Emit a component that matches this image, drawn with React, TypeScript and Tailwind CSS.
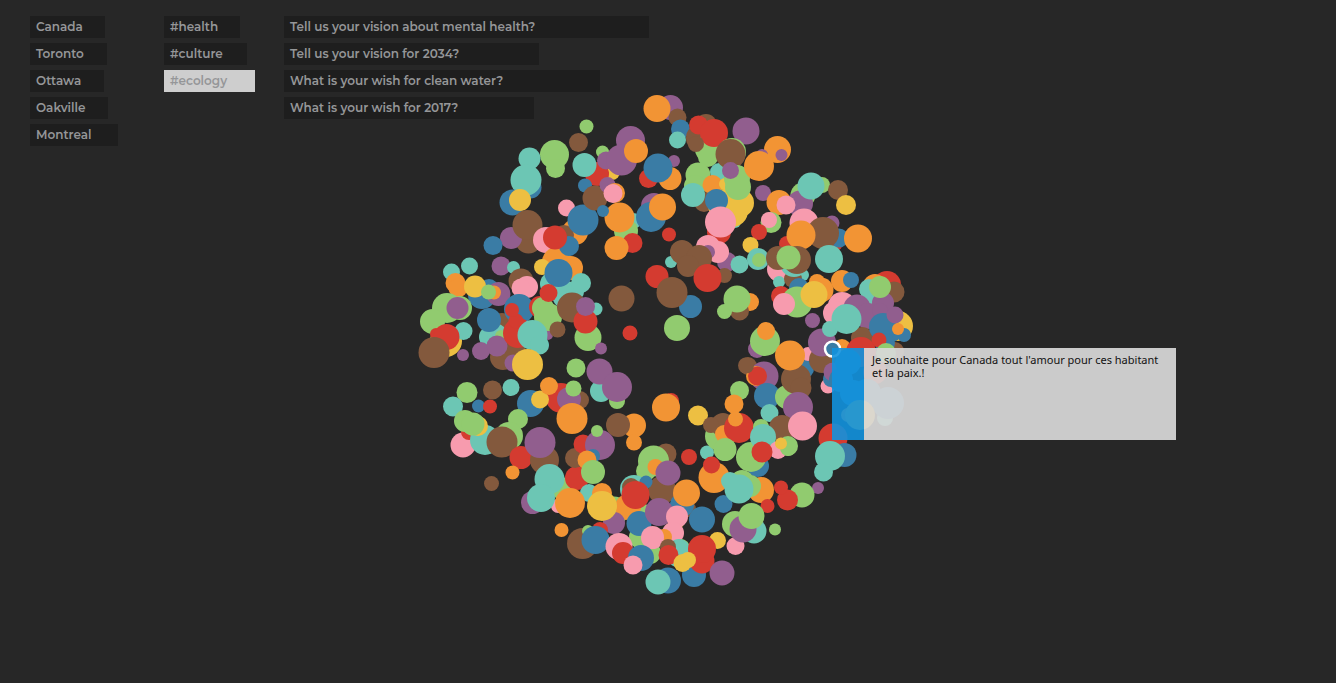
const palette: Record<string, string> = {
  o: '#f29434',
  p: '#915e8e',
  b: '#3a7ca5',
  t: '#6cc6b4',
  g: '#91cb6f',
  n: '#83593d',
  r: '#d43b30',
  y: '#edbf42',
  k: '#f79bae',
};

// Each entry is "colour x y radius", painted in order.
const wishes = `
g 586.5 126.5 7;n 578.5 142.5 9.5;g 554.5 154.5 14.5;g 555.5 168.5 9.5;t 529.5 158.5 11;b 530.5 187.5 11;t 526 180 15.5;b 512.5 202.5 13;y 520 200 11
n 528.5 240 13.5;p 511 238 11;n 527.5 225 15;b 493 245.5 9.5;k 566.5 208 8.5;o 575 232 13;n 564 235 10;k 546 240 13;o 557 262 15;o 571 268 12
b 569 246 10;r 555 237.5 12;b 583 220 15.5
p 670.5 107.5 12.5;n 677.5 117.5 9;o 657 108.5 13.5;b 680.5 129 9.5;t 677.5 140 8.5;n 706 125 11;n 700 138 14;g 709 149 14;r 698.5 125 9.5;r 714 133 14;n 696 144 8
g 708 157 10;p 746 131 13.5;t 719 172 9;g 732 152 14;n 730.5 154 15;g 698 175 12.5;g 695 186 11;o 712.5 185 10;n 704 202 10;y 725 184 6
t 735 222 6;y 724 205 16;y 732 211 16;y 740 203 14;g 737 178 13;g 738 187 13;p 730.5 170.5 8.5;t 693 195 12;b 716.5 200.5 11.5
r 719 232 12;k 708 247 12;p 727 262 10;k 718 252 11;p 708 252 7;k 720.5 222 15.5
p 630.5 140.5 14.5;y 612 172 8;g 602.5 152 6.5;r 597 174 12;p 606 160.5 9;p 621.5 160 15.5;o 636 151 12;t 584.5 165 12;b 585 185.5 7
n 595 198 12.5;p 607.5 185 8;o 615 193 10;k 613 193.5 9.5;t 633 221 8;g 626 231 12;o 619.5 217.5 15;b 603 211 6;r 632.5 243 10;o 616.5 248 12
p 674 161 6;r 648.5 178.5 9.5;o 670 178.5 11.5;b 658 168 14.5;p 654 206 13;b 651 217 15;o 662.5 207 13.5;r 669 234.5 7
o 777.5 149.5 13.5;p 762 155 6;p 781.5 155 6;o 759 166 15;p 763 193 8;o 779 202.5 12.5;g 803 195 12.5;p 800 203.5 13;k 786 205 9.5
g 822 185 8;t 811 186 13.5;n 838 190 10;y 846 205 10;g 771 222.5 10.5;k 769 220 8;r 759 232 8;y 750.5 245 8
k 804 223 14.5;p 832 223 7.5;r 835 243 8;b 839 238 9.5;o 858 238.5 14;n 823 233 16;r 787 244 8;o 801 235 14.5
t 758 259 11;g 759 260 7;k 780 269 13;t 779 282 6;t 803 275 6;n 793 279 9;t 794 263 14;n 778 258 12;n 797 260 14;g 788.5 257.5 12;t 829 259 14
t 671 262 6;n 682 252 12;n 699 258 13;n 688 266 11;t 739.5 264.5 9;n 724.5 275.5 7.5;r 657 276.5 11.5;b 690.5 306.5 11.5;n 672 292.5 15.5;r 707.5 278 14
n 621.5 298.5 13;g 677 328 13;r 630 333 7.5;o 750 302 9;n 739.5 311 9.5;g 724.5 311.5 7.5;g 737 299 13.5
t 469.5 266 8.5;t 451.5 272 8.5;o 455.5 283 10;o 458 288 9.5;p 501 266 9.5;t 513.5 267.5 6.5;n 521 281 12.5;y 542 267 8
t 552 284 12;t 566 295 14;t 575 292 9;t 581 283 10;k 527 287 11;k 521 288 9.5;b 558.5 273 14
b 482 295 14;b 489 289 10;y 475 286.5 11;p 498.5 294 12;o 494 292.5 7;g 488.5 292 7.5
g 447 308 15;g 460 308 12;p 457.5 308 11;g 432.5 321.5 12.5;n 502 324 11;t 490 337 11;t 497 334 10;g 501 336 6
b 489 320 12;y 446 341 16;t 463.5 331 9;r 436 334 6;r 446.5 337 13;n 434 352.5 15.5;p 463 355 6;n 503 357 13;n 514 352 12;p 481 351 9;p 497 346 10.5;p 513 363 8.5
b 519 309 15;r 540 307 11;r 518 333 15;r 516 321 7.5;r 512 310 7;p 548 335 5;g 543 308 11;g 548 317 14;n 557.5 329.5 8;b 543 345 6;t 532.5 335 15;t 539.5 345 9.5;y 527.5 364.5 15.5;r 548.5 293 9
n 572 307.5 15;t 596 309 6.5;g 588 337.5 13.5;r 585.5 321.5 12;p 585.5 306.5 9.5;p 601 348.5 6
g 467 392.5 10.5;n 492.5 390 9.5;t 511 387.5 8.5;b 478.5 406 6.5;r 490 406.5 7;t 453 406.5 10;b 530.5 403.5 13.5;r 561 398 15;y 540 399.5 9;o 549 386 9
n 580 400 9;p 569 399 12;g 573.5 388.5 8;g 576 368 9.5;o 572 418.5 15.5;g 518 419 10;k 463 445 12.5;r 469 432 8;t 485 440 15;y 478 426 10;g 465 421 11;g 473 424 11.5
t 601 391 11;g 617 401 8;p 599.5 371.5 13;p 617 387 15;r 671 401 8;o 666 407.5 14;y 698 415.5 10;o 634 425.5 12;n 618 425 12
g 509 436 14;n 502 442 15.5;r 521 457.5 11.5;n 544.5 460 14.5;p 540 442.5 15.5;o 512.5 472.5 7;n 491.5 483.5 7.5
g 561 488 11;t 549.5 479 15;p 532.5 502.5 11.5;k 558 506 7;t 541 498 14;r 577 478 12;n 575 458 10;t 589 493 9;o 602 493 10;o 570 503 15;o 561.5 530 7;n 582.5 543.5 15.5
r 583 444 9.5;p 600 445 15;g 597 431 6;b 593 456 7;o 587 460 9.5;g 593 472 12;o 634 442.5 8;n 666 454 10.5;g 653.5 461 15.5;g 646 471 10;o 655.5 467 8
n 662 490 14;n 688 509 8;b 682 505 12;g 644 513 9;p 668 473 12.5;r 689 457 8;o 714 477.5 15.5;t 707 452.5 7;r 711.5 465 8.5;o 686.5 493 13.5
t 634 489 14;n 631 487 9;b 646 482 6.5;g 614 511 14.5;o 628 507 13;p 614 523 11;r 635.5 495 14;y 602 506 15
g 641 537 12;g 650 553 11;r 600 530 8;g 588 531 6;b 639 523.5 12.5;p 659 512 14;y 676 522 8;b 702 519.5 13;k 677 516.5 11;k 673 533 11;o 664 537 8;k 652.5 537.5 11.5
b 595.5 540 14;k 619 546.5 13.5;r 623 553 11;b 641 558 13;k 633 565 9.5;t 678 556 11;g 681 548 9;t 679 550 11;n 668 547 8;r 668.5 555 10;b 694 575 12
y 717.5 540.5 8.5;r 702 561 12.5;r 702 549 14;y 682.5 563 9;y 688 560 8;b 668 580.5 13;t 658 582 12.5;p 722 573 12.5;k 735.5 546 9;b 723.5 504 9
b 805 369 9;p 757 349 9;g 765 341 15;o 766 331 9;n 748 366 9;k 808 354 7;n 822 360 13;p 822 342.5 14;p 764 376 14.5;o 756 376 10;r 757.5 376 9.5;n 746 365.5 8
b 767 396 13;g 787 397 12;n 796 379 15;n 801 388 10.5;o 790 355.5 15;p 798 407 15;t 769.5 413 9
g 739.5 390.5 9.5;g 720 436 15;n 723 425 12;n 711 425 8;o 724 434 9;r 739 428 15;o 734 404 9.5;o 735.5 419 7.5;g 725 449.5 11.5
b 758 466 11;g 742 482 12;g 751 457 15;g 761 427 8;n 782 428 13;t 763 437 13;g 788 446 10;k 778 450 9;r 762 452 10.5;g 788 448 8;y 781 443.5 6;k 802.5 426 14.5
o 761 490 13;g 750 486 11;t 730 481 9;t 739 489 14.5;r 767.5 506 7;t 754 531 12.5;g 735 524 13;p 743 529 13.5;g 751.5 516 13;g 775 529.5 6
b 799 288 10;r 781 296 10;g 797 302 15.5;k 784 304 11;o 817 282 8;o 821 290 12.5;y 814 294.5 13.5;p 812.5 320.5 7.5;o 842 281 11;b 851 280 8
r 887 285 14;n 894 292 10.5;o 875 286 12;t 871 300 11;t 869 289 10;p 883 303 11;g 880 287 11;k 842 306 14;k 835 313 12;o 853 312 10;p 857 308 13.5;p 868 316 13;p 880 311 8;n 862 338 11
t 830 329 8;t 846.5 319 15;y 898 326 15;b 904 335 7;b 892 333 9;b 883 327 14;p 895 315 8.5;o 898 329 6;n 895 351 9;b 885 343 10;o 842 348 9;r 861 352 15;r 879 340 7.5
k 828 386 7.5;b 831 379 8;p 833 372 9.5;b 848 362 13;b 841 380 12;r 875 372 12;g 886 353 10;b 853 393 13;b 867 393 14;t 885 418 8;b 888 403 16;o 848 415 7;y 860 415 15
r 833 438 14.5;b 844.5 455 12;t 830 456 15;t 823.5 472 9.5;p 818 488 6;g 802 495 12.5;r 787.5 500 10.5;r 781 487.5 7`
  .trim()
  .split(/[;\n]/)
  .map((entry) => {
    const [tone, x, y, radius] = entry.trim().split(' ');
    return { fill: palette[tone], x: Number(x), y: Number(y), radius: Number(radius) };
  });

type Filter = { label: string; width: string; active?: boolean };

const cities: Filter[] = [
  { label: 'Canada', width: 'w-[75px]' },
  { label: 'Toronto', width: 'w-[77px]' },
  { label: 'Ottawa', width: 'w-[74px]' },
  { label: 'Oakville', width: 'w-[78px]' },
  { label: 'Montreal', width: 'w-[88px]' },
];

const tags: Filter[] = [
  { label: '#health', width: 'w-[76px]' },
  { label: '#culture', width: 'w-[83px]' },
  { label: '#ecology', width: 'w-[91px]', active: true },
];

const questions: Filter[] = [
  { label: 'Tell us your vision about mental health?', width: 'w-[365px]' },
  { label: 'Tell us your vision for 2034?', width: 'w-[255px]' },
  { label: 'What is your wish for clean water?', width: 'w-[316px]' },
  { label: 'What is your wish for 2017?', width: 'w-[250px]' },
];

function FilterList({ items, className }: { items: Filter[]; className: string }) {
  return (
    <ul className={`flex flex-col gap-[5px] ${className}`}>
      {items.map((item) => (
        <li key={item.label} className="flex">
          <button
            type="button"
            aria-pressed={Boolean(item.active)}
            className={`h-[22px] whitespace-nowrap px-1.5 text-left text-[12px] leading-[22px] font-semibold text-[#959698] ${item.width} ${
              item.active ? 'bg-[#cecece]' : 'bg-[#1e1e1e]'
            }`}
          >
            {item.label}
          </button>
        </li>
      ))}
    </ul>
  );
}

export default function App() {
  return (
    <main className="relative min-h-screen overflow-hidden bg-[#272727] font-['Montserrat','Inter',sans-serif]">
      <svg
        className="absolute top-0 left-1/2 -translate-x-1/2"
        width="1336"
        height="683"
        viewBox="0 0 1336 683"
        aria-hidden="true"
      >
        {wishes.map((wish, index) => (
          <circle key={index} cx={wish.x} cy={wish.y} r={wish.radius} fill={wish.fill} />
        ))}
        <circle cx="832.5" cy="349" r="7.5" fill="#3a7ca5" stroke="#ffffff" strokeWidth="2.5" />
      </svg>

      <nav className="relative flex items-start pt-4 pl-[30px]">
        <FilterList items={cities} className="w-[134px]" />
        <FilterList items={tags} className="w-[120px]" />
        <FilterList items={questions} className="" />
      </nav>

      <article className="absolute top-[348px] left-[calc(50%+164px)] flex h-[92px] w-[344px]">
        <div className="w-8 bg-[#1292de]/90" />
        <p className="flex-1 bg-[#d9d9d9]/92 px-2 pt-[5px] font-['Noto_Sans',sans-serif] text-[11px] leading-[13px] text-[#111111]">
          Je souhaite pour Canada tout l'amour pour ces habitant et la paix.!
        </p>
      </article>
    </main>
  );
}
